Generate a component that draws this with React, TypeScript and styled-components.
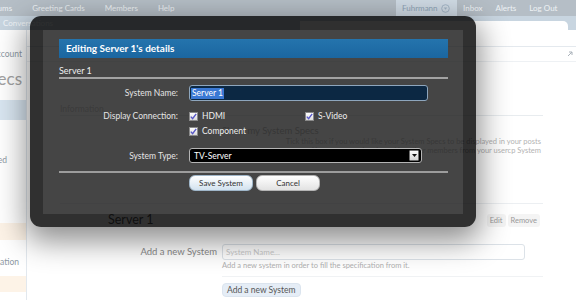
import React from 'react';
import styled, { createGlobalStyle } from 'styled-components';

const GlobalStyle = createGlobalStyle`
  html, body {
    margin: 0;
    padding: 0;
    background: #fff;
  }
  body {
    font-family: Lato, 'Open Sans', 'Liberation Sans', sans-serif;
    overflow: hidden;
  }
  * {
    box-sizing: border-box;
  }
`;

const Page = styled.div`
  position: relative;
  width: 576px;
  height: 300px;
  overflow: hidden;
  background: #fff;
  display: flex;
  flex-direction: column;
`;

/* ---------- forum chrome behind the overlay ---------- */

const TopNav = styled.div`
  height: 16px;
  flex-shrink: 0;
  background: #b5bec6;
  display: flex;
  justify-content: space-between;
`;

const NavTabs = styled.div`
  display: flex;
  margin-left: -24px;
`;

const NavTab = styled.div`
  padding: 0 10px;
  font-size: 8px;
  line-height: 16px;
  color: #eef2f5;
  white-space: nowrap;
`;

const VisitorTabs = styled.div`
  display: flex;
  padding-right: 12px;
`;

const VisitorTab = styled.div<{ $active?: boolean }>`
  display: flex;
  align-items: center;
  gap: 3px;
  padding: 0 ${(p) => (p.$active ? '7px 0 6px' : '6.5px')};
  font-size: 8px;
  white-space: nowrap;
  color: ${(p) => (p.$active ? '#8ea3b7' : '#eef2f5')};
  background: ${(p) => (p.$active ? '#d0dbe5' : 'transparent')};
`;

const SubNav = styled.div`
  height: 14px;
  flex-shrink: 0;
  background: #c8d5e0;
  display: flex;
  justify-content: space-between;
  align-items: flex-end;
`;

const Crumb = styled.div`
  align-self: center;
  padding-left: 3px;
  font-size: 8px;
  line-height: 14px;
  color: #f2f6f9;
`;

const SubNavPanel = styled.div`
  width: 268px;
  height: 9px;
  margin-right: 8px;
  background: #fff;
  border-radius: 0 5px 0 0;
`;

const Body = styled.div`
  flex: 1;
  display: flex;
  min-height: 0;
`;

const Sidebar = styled.div`
  width: 27px;
  flex-shrink: 0;
  border-right: 1px solid #e2e8ee;
  overflow: hidden;
  display: flex;
  flex-direction: column;
`;

const SideLink = styled.div<{ $mt: number; $pr: number; $big?: boolean }>`
  margin-top: ${(p) => p.$mt}px;
  padding-right: ${(p) => p.$pr}px;
  display: flex;
  justify-content: flex-end;
  white-space: nowrap;
  font-size: ${(p) => (p.$big ? '17px' : '8.5px')};
  line-height: ${(p) => (p.$big ? '18px' : '12px')};
  color: ${(p) => (p.$big ? '#a3a3a3' : '#8d98a3')};
`;

const SideBand = styled.div<{ $mt: number; $h: number; $tone: 'blue' | 'orange' }>`
  margin-top: ${(p) => p.$mt}px;
  height: ${(p) => p.$h}px;
  flex-shrink: 0;
  background: ${(p) => (p.$tone === 'blue' ? '#d9e6f1' : '#fdf3e7')};
`;

const Main = styled.div`
  flex: 1;
  min-width: 0;
  display: flex;
  flex-direction: column;
`;

const BlockHeader = styled.div`
  margin-top: 16px;
  height: 16px;
  border-top: 1px solid #e4e9ee;
  border-bottom: 1px solid #eef1f4;
  display: flex;
  align-items: center;
  justify-content: flex-end;
  padding-right: 3px;
`;

const Content = styled.div`
  padding: 0 33px;
  display: flex;
  flex-direction: column;
`;

const InfoHeading = styled.div`
  margin-top: 41px;
  line-height: 12px;
  font-size: 8.5px;
  color: #c6c6c6;
  border-bottom: 1px solid #e8ecef;
`;

const CtrlRow = styled.div<{ $mt: number }>`
  margin-top: ${(p) => p.$mt}px;
  display: grid;
  grid-template-columns: 157px 1fr;
  column-gap: 5px;
  align-items: start;
`;

const CtrlLabel = styled.div`
  text-align: right;
  font-size: 9.5px;
  line-height: 16px;
  color: #8a8a8a;
  white-space: nowrap;
`;

const SpecsToggle = styled.div`
  font-size: 9.5px;
  line-height: 12px;
  color: #a8a8a8;
`;

const Explain = styled.div`
  padding-right: 2px;
  text-align: right;
  font-size: 7.5px;
  line-height: 9px;
  color: #b3b3b3;
  white-space: nowrap;
`;

const ServerRow = styled.div`
  margin-top: 48px;
  border-top: 1px solid #eceff2;
  padding: 9px 3px 13px 48px;
  display: flex;
  align-items: center;
  justify-content: space-between;
`;

const ServerTitle = styled.div`
  font-size: 12.5px;
  line-height: 14px;
  color: #555;
`;

const MiniButtons = styled.div`
  display: flex;
  gap: 2px;
`;

const MiniButton = styled.span`
  height: 13px;
  padding: 0 3px;
  border-radius: 3px;
  background: #f4f4f4;
  font-size: 7.5px;
  line-height: 13px;
  color: #9a9a9a;
`;

const AddBox = styled.div`
  width: 303px;
  height: 16px;
  border: 1px solid #dce2e8;
  border-radius: 3px;
  padding-left: 3px;
  font-size: 8px;
  line-height: 14px;
  color: #cacaca;
`;

const HelpText = styled.div`
  margin-top: 1px;
  padding-bottom: 5px;
  border-bottom: 1px solid #f0f2f4;
  font-size: 7.5px;
  line-height: 10px;
  color: #b0b0b0;
`;

const AddButton = styled.div`
  margin-top: 4px;
  display: inline-block;
  height: 14px;
  padding: 0 4px;
  border: 1px solid #dbe4ee;
  border-radius: 4px;
  background: #e5edf6;
  font-size: 8.5px;
  line-height: 12px;
  white-space: nowrap;
  color: #555;
`;

/* ---------- overlay ---------- */

const Overlay = styled.div`
  position: absolute;
  left: 30px;
  top: 16px;
  width: 446px;
  height: 211px;
  padding: 14px 13px 13px;
  background: rgba(0, 0, 0, 0.81);
  border-radius: 11px;
  box-shadow: 0 10px 30px 4px rgba(0, 0, 0, 0.45);
`;

const Panel = styled.div`
  height: 100%;
  background: rgba(255, 255, 255, 0.1);
  padding: 9px 15px 0 16px;
  display: flex;
  flex-direction: column;
`;

const Heading = styled.h2`
  margin: 0;
  height: 19px;
  padding: 0 7px;
  background: linear-gradient(#2474ad, #1b66a0);
  color: #fff;
  font-size: 10px;
  font-weight: 700;
  line-height: 19px;
`;

const SubHeading = styled.h3`
  margin: 7px 0 0;
  font-size: 9px;
  font-weight: normal;
  line-height: 12px;
  color: #eee;
  border-bottom: 2px solid #a3a3a3;
`;

const FormRow = styled.div<{ $mt: number }>`
  margin-top: ${(p) => p.$mt}px;
  display: grid;
  grid-template-columns: 119px 1fr;
  column-gap: 11px;
  align-items: center;
`;

const Label = styled.label<{ $top?: boolean }>`
  align-self: ${(p) => (p.$top ? 'start' : 'center')};
  text-align: right;
  font-size: 8.5px;
  line-height: 12px;
  color: #e4e4e4;
  white-space: nowrap;
`;

const TextBox = styled.div`
  width: 239px;
  height: 16px;
  border: 1px solid #8ea6bd;
  border-radius: 3px;
  background: #0c2843;
  padding: 0 1px;
  display: flex;
  align-items: center;
`;

const Selected = styled.span`
  background: #3a78d4;
  color: #fff;
  font-size: 8.5px;
  line-height: 11px;
  padding: 0 1px;
`;

const Checks = styled.div`
  width: 239px;
  display: flex;
  flex-wrap: wrap;
  row-gap: 3px;
`;

const CheckItem = styled.span`
  width: 116px;
  display: flex;
  align-items: center;
  gap: 4px;
  font-size: 8.5px;
  line-height: 12px;
  color: #eee;
`;

const CheckBox = styled.span`
  width: 9px;
  height: 9px;
  border: 1px solid #8a8a8a;
  background: linear-gradient(#fff, #dadada);
  display: flex;
  align-items: center;
  justify-content: center;
`;

const SelectBox = styled.div`
  width: 233px;
  height: 15px;
  background: #000;
  border: 1px solid #b5b5b5;
  border-radius: 3px;
  display: flex;
  align-items: center;
  justify-content: space-between;
  padding: 0 2px 0 4px;
  font-size: 8.5px;
  color: #fff;
`;

const SelectArrow = styled.span`
  width: 10px;
  height: 11px;
  background: linear-gradient(#fafafa, #d4d4d4);
  border: 1px solid #6f6f6f;
  border-radius: 1px;
  display: flex;
  align-items: center;
  justify-content: center;
`;

const Divider = styled.div`
  margin-top: 8px;
  height: 2px;
  background: #9d9d9d;
`;

const Buttons = styled.div`
  display: flex;
  gap: 3px;
`;

const Button = styled.button<{ $primary?: boolean }>`
  width: 64px;
  height: 16px;
  padding: 0;
  border-radius: 6px;
  border: 1px solid ${(p) => (p.$primary ? '#9fb6c9' : '#b4b4b4')};
  background: ${(p) =>
    p.$primary ? 'linear-gradient(#ffffff, #d2e2ef)' : 'linear-gradient(#ffffff, #e2e2e2)'};
  font-family: inherit;
  font-size: 8px;
  color: #333;
`;

const Check = () => (
  <CheckBox>
    <svg width="7" height="7" viewBox="0 0 7 7">
      <path d="M0.8 3.6 L2.6 5.6 L6.2 0.8" stroke="#5858c8" strokeWidth="1.4" fill="none" />
    </svg>
  </CheckBox>
);

const App = () => (
  <Page>
    <GlobalStyle />
    <TopNav>
      <NavTabs>
        <NavTab>Forums</NavTab>
        <NavTab>Greeting Cards</NavTab>
        <NavTab>Members</NavTab>
        <NavTab>Help</NavTab>
      </NavTabs>
      <VisitorTabs>
        <VisitorTab $active>
          Fuhrmann
          <svg width="9" height="9" viewBox="0 0 9 9">
            <circle cx="4.5" cy="4.5" r="3.8" fill="none" stroke="#9fb2c4" strokeWidth="0.9" />
            <path d="M2.8 3.6 L6.2 3.6 L4.5 5.7 Z" fill="#9fb2c4" />
          </svg>
        </VisitorTab>
        <VisitorTab>Inbox</VisitorTab>
        <VisitorTab>Alerts</VisitorTab>
        <VisitorTab>Log Out</VisitorTab>
      </VisitorTabs>
    </TopNav>
    <SubNav>
      <Crumb>Conversations</Crumb>
      <SubNavPanel />
    </SubNav>
    <Body>
      <Sidebar>
        <SideLink $mt={18} $pr={4}>
          <span>Your Account</span>
        </SideLink>
        <SideLink $mt={10} $pr={4} $big>
          <span>System Specs</span>
        </SideLink>
        <SideBand $mt={12} $h={20} $tone="blue" />
        <SideLink $mt={34} $pr={19}>
          <span>Followed</span>
        </SideLink>
        <SideBand $mt={57} $h={17} $tone="orange" />
        <SideLink $mt={16} $pr={7}>
          <span>Start a New Conversation</span>
        </SideLink>
        <SideBand $mt={8} $h={16} $tone="orange" />
      </Sidebar>
      <Main>
        <BlockHeader>
          <svg width="6" height="6" viewBox="0 0 6 6">
            <path d="M1 5 L5 1 M2 1 L5 1 L5 4" stroke="#aab2ba" strokeWidth="1" fill="none" />
          </svg>
        </BlockHeader>
        <Content>
          <InfoHeading>Information</InfoHeading>
          <CtrlRow $mt={9}>
            <span />
            <div>
              <SpecsToggle>Show my System Specs</SpecsToggle>
              <Explain>
                Tick this box if you would like your System Specs to be displayed in your posts
                <br />
                Your specs can be viewed by other members from your usercp System
              </Explain>
            </div>
          </CtrlRow>
          <ServerRow>
            <ServerTitle>Server 1</ServerTitle>
            <MiniButtons>
              <MiniButton>Edit</MiniButton>
              <MiniButton>Remove</MiniButton>
            </MiniButtons>
          </ServerRow>
          <CtrlRow $mt={4}>
            <CtrlLabel>Add a new System</CtrlLabel>
            <div>
              <AddBox>System Name...</AddBox>
              <HelpText>Add a new system in order to fill the specification from it.</HelpText>
              <AddButton>Add a new System</AddButton>
            </div>
          </CtrlRow>
        </Content>
      </Main>
    </Body>

    <Overlay>
      <Panel>
        <Heading>Editing Server 1's details</Heading>
        <SubHeading>Server 1</SubHeading>
        <FormRow $mt={6}>
          <Label>System Name:</Label>
          <TextBox>
            <Selected>Server 1</Selected>
          </TextBox>
        </FormRow>
        <FormRow $mt={9}>
          <Label $top>Display Connection:</Label>
          <Checks>
            <CheckItem>
              <Check />
              HDMI
            </CheckItem>
            <CheckItem>
              <Check />
              S-Video
            </CheckItem>
            <CheckItem>
              <Check />
              Component
            </CheckItem>
          </Checks>
        </FormRow>
        <FormRow $mt={11}>
          <Label>System Type:</Label>
          <SelectBox>
            TV-Server
            <SelectArrow>
              <svg width="5" height="3" viewBox="0 0 5 3">
                <path d="M0 0 L5 0 L2.5 3 Z" fill="#111" />
              </svg>
            </SelectArrow>
          </SelectBox>
        </FormRow>
        <Divider />
        <FormRow $mt={2}>
          <span />
          <Buttons>
            <Button $primary>Save System</Button>
            <Button>Cancel</Button>
          </Buttons>
        </FormRow>
      </Panel>
    </Overlay>
  </Page>
);

export default App;
